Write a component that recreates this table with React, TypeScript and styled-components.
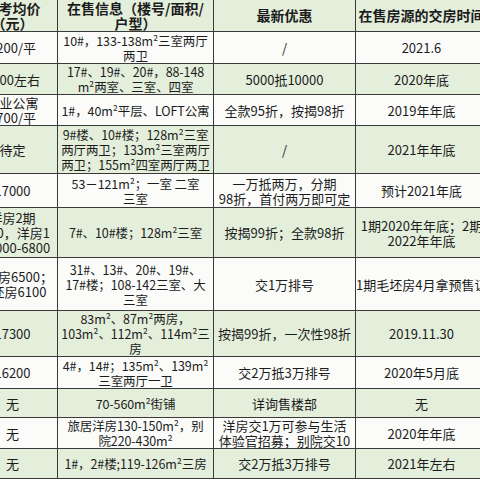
import React from "react";
import styled, { createGlobalStyle } from "styled-components";

const Global = createGlobalStyle`
  html, body { margin: 0; padding: 0; background: #ffffff; }
  body { width: 480px; height: 480px; overflow: hidden; }
`;

const Frame = styled.div`
  width: 480px;
  height: 480px;
  overflow: hidden;
  background: #ffffff;
`;

const Table = styled.table`
  border-collapse: collapse;
  table-layout: fixed;
  width: 520px;
  margin: -1px 0 0 -33px;
  font-family: "Noto Sans CJK SC", "Noto Sans", sans-serif;
  color: #1c1c1c;
`;

const Row = styled.tr<{ $shade: boolean; $h: number }>`
  height: ${(p) => p.$h}px;
  background: ${(p) => (p.$shade ? "#e3eedb" : "#fbfcfa")};
`;

const HeadCell = styled.th`
  border: 1px solid #3a3a3a;
  padding: 0;
  font-size: 14px;
  font-weight: 700;
  line-height: 15px;
  text-align: center;
  vertical-align: middle;
  white-space: pre;
  overflow: hidden;
`;

const Cell = styled.td<{ $dense?: boolean }>`
  border: 1px solid #3a3a3a;
  padding: 0;
  font-size: ${(p) => (p.$dense ? "12.5px" : "13px")};
  letter-spacing: ${(p) => (p.$dense ? "-0.1px" : "0")};
  line-height: 15px;
  text-align: center;
  vertical-align: middle;
  white-space: pre;
  overflow: hidden;
`;

const widths = [90, 156, 142, 132];

const header = ["参考均价\n（元）", "在售信息（楼号/面积/\n户型）", "最新优惠", "在售房源的交房时间"];

const rows: { h: number; cells: string[] }[] = [
  { h: 32, cells: ["6200/平", "10#，133-138m²三室两厅\n两卫", "/", "2021.6"] },
  { h: 31, cells: ["8000左右", "17#、19#、20#，88-148\nm²两室、三室、四室", "5000抵10000", "2020年底"] },
  { h: 31, cells: ["商业公寓\n6700/平", "1#，40m²平层、LOFT公寓", "全款95折，按揭98折", "2019年年底"] },
  { h: 48, cells: ["待定", "9#楼、10#楼；128m²三室\n两厅两卫；133m²三室两厅\n两卫；155m²四室两厅两卫", "/", "2021年年底"] },
  { h: 34, cells: ["17000", "53－121m²；一室 二室\n三室", "一万抵两万，分期\n98折，首付两万即可定", "预计2021年底"] },
  { h: 50, cells: ["洋房2期\n7000，洋房1\n期6000-6800", "7#、10#楼；128m²三室", "按揭99折；全款98折", "1期2020年年底；2期\n2022年年底"] },
  { h: 53, cells: ["精装房6500；\n毛坯房6100", "31#、13#、20#、19#、\n17#楼；108-142三室、大\n三室", "交1万排号", "1期毛坯房4月拿预售证"] },
  { h: 46, cells: ["17300", "83m²、87m²两房，\n103m²、112m²、114m²三\n房", "按揭99折，一次性98折", "2019.11.30"] },
  { h: 32, cells: ["16200", "4#，14#；135m²、139m²\n三室两厅一卫", "交2万抵3万排号", "2020年5月底"] },
  { h: 29, cells: ["无", "70-560m²街铺", "详询售楼部", "无"] },
  { h: 31, cells: ["无", "旅居洋房130-150m²，别\n院220-430m²", "洋房交1万可参与生活\n体验官招募；别院交10", "2020年年底"] },
  { h: 30, cells: ["无", "1#，2#楼;119-126m²三房", "交2万抵3万排号", "2021年左右"] },
];

export default function App() {
  return (
    <Frame>
      <Global />
      <Table>
        <colgroup>
          {widths.map((w, i) => (
            <col key={i} style={{ width: w }} />
          ))}
        </colgroup>
        <thead>
          <Row $shade $h={32}>
            {header.map((t, i) => (
              <HeadCell key={i}>{t}</HeadCell>
            ))}
          </Row>
        </thead>
        <tbody>
          {rows.map((r, i) => (
            <Row key={i} $shade={i % 2 === 1} $h={r.h}>
              {r.cells.map((c, j) => (
                <Cell key={j} $dense={j === 1}>
                  {c}
                </Cell>
              ))}
            </Row>
          ))}
        </tbody>
      </Table>
    </Frame>
  );
}
